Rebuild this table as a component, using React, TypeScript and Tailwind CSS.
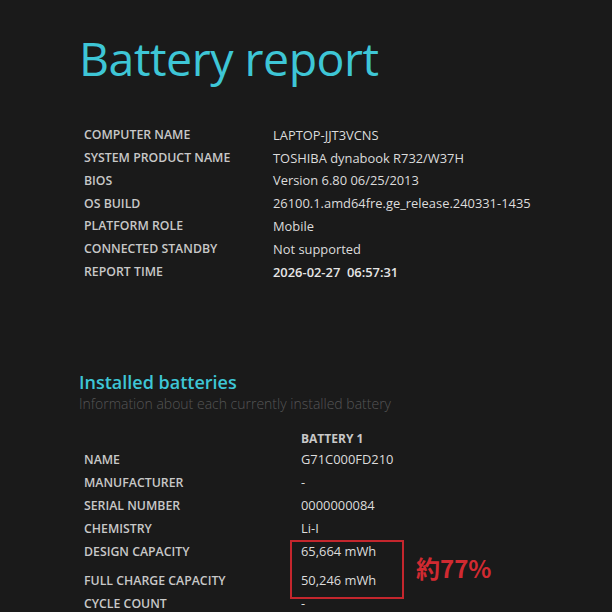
import React from "react";

const info: [string, string, boolean?][] = [
  ["COMPUTER NAME", "LAPTOP-JJT3VCNS"],
  ["SYSTEM PRODUCT NAME", "TOSHIBA dynabook R732/W37H"],
  ["BIOS", "Version 6.80 06/25/2013"],
  ["OS BUILD", "26100.1.amd64fre.ge_release.240331-1435"],
  ["PLATFORM ROLE", "Mobile"],
  ["CONNECTED STANDBY", "Not supported"],
  ["REPORT TIME", "2026-02-27\u00a0\u00a006:57:31", true],
];

const battery: [string, string, string][] = [
  ["NAME", "G71C000FD210", ""],
  ["MANUFACTURER", "-", ""],
  ["SERIAL NUMBER", "0000000084", ""],
  ["CHEMISTRY", "Li-I", ""],
  ["DESIGN CAPACITY", "65,664 mWh", ""],
  ["FULL CHARGE CAPACITY", "50,246 mWh", "mt-[6px]"],
  ["CYCLE COUNT", "-", ""],
];

export default function App() {
  return (
    <div
      className="w-[612px] h-[612px] overflow-hidden bg-[#1a1a1a] text-[#dedede]"
      style={{ fontFamily: '"Open Sans", "Noto Sans", sans-serif' }}
    >
      <div className="pl-[79px] pt-[23px]">
        <h1 className="text-[46.5px] leading-[70px] text-[#3ec6d6] tracking-[-0.5px]">
          Battery report
        </h1>
        <div className="mt-[31px] pl-[5px] flex flex-col">
          {info.map(([k, v, b]) => (
            <div key={k} className="flex h-[22.8px] items-center">
              <div className="w-[189px] text-[12.3px] font-semibold text-[#c8c8c8]">{k}</div>
              <div className={`text-[12.9px] ${b ? "font-semibold text-[#e6e6e6]" : "text-[#dcdcdc]"}`}>{v}</div>
            </div>
          ))}
        </div>
        <div className="mt-[86px]">
          <h2 className="text-[18px] leading-[24px] font-semibold text-[#3ec6d6]">Installed batteries</h2>
          <div className="text-[14px] leading-[20px] font-light text-[#555555]">
            Information about each currently installed battery
          </div>
        </div>
        <div className="relative mt-[16px] pl-[5px]">
          <div className="flex h-[19px] items-center">
            <div className="w-[217px]" />
            <div className="text-[12px] font-bold text-[#c8c8c8]">BATTERY 1</div>
          </div>
          {battery.map(([k, v, extra]) => (
            <div key={k} className={`flex items-center h-[23px] ${extra}`}>
              <div className="w-[217px] text-[12.3px] font-semibold text-[#c8c8c8]">{k}</div>
              <div className="text-[12.9px] text-[#dcdcdc]">{v}</div>
            </div>
          ))}
          <div className="absolute left-[211px] top-[110px] w-[114px] h-[59px] border-[2.5px] border-[#c4262d]" />
          <div
            className="absolute left-[337px] top-[123px] text-[24px] font-bold leading-[30px] text-[#d12a31]"
            style={{ fontFamily: '"Noto Sans CJK JP", "Open Sans", sans-serif' }}
          >
            約77%
          </div>
        </div>
      </div>
    </div>
  );
}
